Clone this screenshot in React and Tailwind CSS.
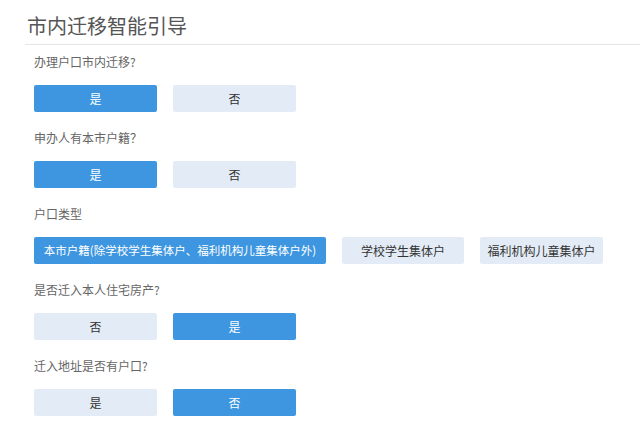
import React from "react";

const font = { fontFamily: '"Noto Sans CJK SC", "Noto Sans", sans-serif' };

function Btn({ active, w, size = "text-[12px]", children }) {
  return (
    <div
      className={
        "h-[27px] rounded-[2px] flex items-center justify-center " +
        size +
        " " +
        w +
        " " +
        (active ? "bg-[#3d96df] text-white" : "bg-[#e3ecf6] text-[#333]")
      }
    >
      {children}
    </div>
  );
}

function Block({ label, children }) {
  return (
    <div className="flex flex-col">
      <div className="h-[18px] leading-[18px] text-[12px] text-[#666]">{label}</div>
      <div className="mt-[14px] flex gap-[16px]">{children}</div>
      <div className="h-[17px]" />
    </div>
  );
}

export default function App() {
  return (
    <div className="w-[640px] h-[438px] bg-white overflow-hidden" style={font}>
      <div className="pl-[25px] pt-[12px]">
        <div className="pl-[2px] h-[28px] leading-[28px] text-[20px] text-[#555]">市内迁移智能引导</div>
        <div className="mt-[4px] border-b border-[#e6e6e6]" />
      </div>
      <div className="pl-[34px] pt-[8px]">
        <Block label="办理户口市内迁移?">
          <Btn active w="w-[123px]">是</Btn>
          <Btn w="w-[123px]">否</Btn>
        </Block>
        <Block label="申办人有本市户籍？">
          <Btn active w="w-[123px]">是</Btn>
          <Btn w="w-[123px]">否</Btn>
        </Block>
        <Block label="户口类型">
          <Btn active w="w-[292px]" size="text-[11.5px]">本市户籍(除学校学生集体户、福利机构儿童集体户外)</Btn>
          <Btn w="w-[122px]">学校学生集体户</Btn>
          <Btn w="w-[123px]">福利机构儿童集体户</Btn>
        </Block>
        <Block label="是否迁入本人住宅房产?">
          <Btn w="w-[123px]">否</Btn>
          <Btn active w="w-[123px]">是</Btn>
        </Block>
        <Block label="迁入地址是否有户口?">
          <Btn w="w-[123px]">是</Btn>
          <Btn active w="w-[123px]">否</Btn>
        </Block>
      </div>
    </div>
  );
}
